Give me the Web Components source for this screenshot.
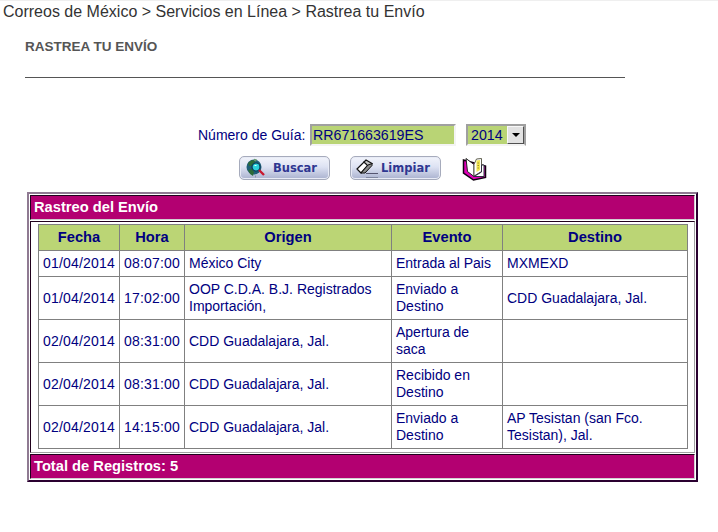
<!DOCTYPE html>
<html lang="es">
<head>
<meta charset="utf-8">
<title>Rastrea tu Envío</title>
<style>
    html,body{
        margin:0;
        background:#fff;
    }
    body{
        width:718px;
        height:532px;
        overflow:hidden;
        font-family:"Liberation Sans",Arial,sans-serif;
    }
</style>
</head>
<body>
<rastreo-page>
    <bread-crumb slot="crumb">Correos de México &gt; Servicios en Línea &gt; Rastrea tu Envío</bread-crumb>
    <page-title slot="title">RASTREA TU ENVÍO</page-title>
    <guia-form slot="form"></guia-form>
    <rastreo-panel slot="panel"></rastreo-panel>
</rastreo-page>

<script>
class RastreoPage extends HTMLElement{
    constructor(){
        super();
        this.attachShadow({mode:'open'}).innerHTML = `
        <style>
            :host{
                display:flex;
                flex-direction:column;
                border-top:1px solid #efefef;
            }
        </style>
        <slot name="crumb"></slot>
        <slot name="title"></slot>
        <slot name="form"></slot>
        <slot name="panel"></slot>`;
    }
}

class BreadCrumb extends HTMLElement{
    constructor(){
        super();
        this.attachShadow({mode:'open'}).innerHTML = `
        <style>
            :host{
                display:block;
                padding:2px 0 0 3px;
                font-size:16px;
                line-height:18px;
                color:#333;
            }
        </style>
        <slot></slot>`;
    }
}

class PageTitle extends HTMLElement{
    constructor(){
        super();
        this.attachShadow({mode:'open'}).innerHTML = `
        <style>
            :host{
                display:block;
                width:600px;
                margin:19px 0 0 25px;
                height:37px;
                border-bottom:1px solid #555;
                font-size:13.5px;
                font-weight:bold;
                line-height:14px;
                color:#555;
            }
        </style>
        <slot></slot>`;
    }
}

class GuiaForm extends HTMLElement{
    constructor(){
        super();
        this.attachShadow({mode:'open'}).innerHTML = `
        <style>
            :host{
                display:flex;
                flex-direction:column;
                margin-top:46px;
                width:718px;
                color:#000080;
                font-size:14.2px;
            }
            .fila{
                display:flex;
                align-items:center;
                height:22px;
                padding-left:198px;
            }
            label{
                width:112px;
                font-size:14px;
            }
            .campo,.anio{
                box-sizing:border-box;
                height:22px;
                background:#b9d475;
                border:2px solid;
                border-color:#a0a0a0 #f4f4f4 #f4f4f4 #a0a0a0;
                line-height:18px;
                color:#000080;
            }
            .campo{
                width:146px;
                padding-left:1px;
            }
            .anio{
                display:flex;
                justify-content:space-between;
                width:60px;
                margin-left:10px;
                padding-left:3px;
                border-right-color:#a0a0a0;
            }
            .flecha{
                box-sizing:border-box;
                width:17px;
                height:18px;
                background:#e2e2e2;
                border:1px solid;
                border-color:#f8f8f8 #505050 #505050 #f8f8f8;
                display:flex;
                align-items:center;
                justify-content:center;
            }
            .flecha::after{
                content:'';
                border:4px solid transparent;
                border-top:4px solid #000;
                border-bottom:0;
            }
            .botones{
                display:flex;
                align-items:flex-start;
                margin-top:10px;
                padding-left:239px;
            }
            .libro{
                margin-left:21px;
                margin-top:1px;
            }
            boton-icono + boton-icono{
                margin-left:20px;
            }
            .buscar{
                margin-right:8px;
                margin-left:6px;
            }
            .limpiar{
                margin-right:3px;
                margin-left:5px;
            }
        </style>
        <div class="fila">
            <label>Número de Guía:</label>
            <div class="campo">RR671663619ES</div>
            <div class="anio">2014<span class="flecha"></span></div>
        </div>
        <div class="botones">
            <boton-icono>
                <svg class="buscar" slot="icono" width="19" height="20" viewBox="0 0 19 20">
                    <circle cx="8" cy="9" r="7.5" fill="#1f5f78"/>
                    <path d="M2 5l4-3 3 1-1 3-3 2-2 0zM2 12l4-1 2 3-1 4-3-2z" fill="#2c6a38"/>
                    <path d="M8 .8l3 .6-1 2-2-.6z" fill="#6a9a70"/>
                    <circle cx="10" cy="9" r="4" fill="#2cd0dc" stroke="#0a3858" stroke-width="1.2"/>
                    <path d="M8.500 7.500l2 0" stroke="#d8ffff"/>
                    <path d="M13 12l5 5" stroke="#c81830" stroke-width="2.400"/>
                    <path d="M9.500 17.500v2" stroke="#9098a8"/>
                </svg>
                <span slot="icono">Buscar</span>
            </boton-icono>
            <boton-icono>
                <svg class="limpiar" slot="icono" width="22" height="21" viewBox="0 0 22 21">
                    <path d="M1 11l7-7 4 3-7 8z" fill="#fff" stroke="#111" stroke-width="1.200"/>
                    <path d="M8 4l2-2 6 3.500-4 2.500z" fill="#c4c4c4" stroke="#111" stroke-width="1.200"/>
                    <path d="M12 7l4-1.500 0 2-7 7.500-4 0z" fill="#8a8a8a" stroke="#111"/>
                    <path d="M10 15.500h12" stroke="#555570"/>
                    <path d="M10 19.500h12" stroke="#8088a0"/>
                </svg>
                <span slot="icono">Limpiar</span>
            </boton-icono>
            <svg class="libro" width="26" height="26" viewBox="0 0 26 26">
                <path d="M1.500 3v13l10 7 12-2.500V9z" fill="#e000b8" stroke="#100010" stroke-width="1.500"/>
                <path d="M4 1.500l1.500 13 6.500 5V7.500z" fill="#fff" stroke="#202020"/>
                <path d="M12 7.500l2.500-5.500 5-.5v13l-7.500 4.500z" fill="#fff" stroke="#606050"/>
                <path d="M14.500 3.500l3.500-.5v10l-3.500 2z" fill="#f4e850"/>
                <path d="M15.500 6h1.500M15.500 8.500h1.500M15.500 11h1.500" stroke="#a09030"/>
                <path d="M12 19.500l7.500-4.500V8h2.500v11.500z" fill="#fff" stroke="#303040"/>
            </svg>
        </div>`;
    }
}

class BotonIcono extends HTMLElement{
    constructor(){
        super();
        this.attachShadow({mode:'open'}).innerHTML = `
        <style>
            :host{
                display:flex;
                align-items:center;
                box-sizing:border-box;
                width:91px;
                height:24px;
                border:1px solid #a6abbc;
                border-radius:5px;
                background:linear-gradient(#f2f4fb,#dde2f3 45%,#aab2cf);
                box-shadow:inset 0 0 0 1px #e8ebf6;
                color:#2e3691;
                font-family:"DejaVu Sans",Verdana,sans-serif;
                font-size:11.5px;
                font-weight:bold;
            }
        </style>
        <slot name="icono"></slot>`;
    }
}

const registros = [
    ['01/04/2014','08:07:00','México City','Entrada al Pais','MXMEXD'],
    ['01/04/2014','17:02:00','OOP C.D.A. B.J. Registrados Importación,','Enviado a Destino','CDD Guadalajara, Jal.'],
    ['02/04/2014','08:31:00','CDD Guadalajara, Jal.','Apertura de saca',''],
    ['02/04/2014','08:31:00','CDD Guadalajara, Jal.','Recibido en Destino',''],
    ['02/04/2014','14:15:00','CDD Guadalajara, Jal.','Enviado a Destino','AP Tesistan (san Fco. Tesistan), Jal.']
];

class RastreoPanel extends HTMLElement{
    constructor(){
        super();
        const filas = registros.map((r, i) =>
            `<tr class="${i == 0 ? 'corta' : ''}">` +
            r.map((c, j) => `<td class="${j < 2 ? 'num' : ''}">${c}</td>`).join('') + '</tr>'
        ).join('');
        this.attachShadow({mode:'open'}).innerHTML = `
        <style>
            :host{
                display:block;
                box-sizing:border-box;
                width:671px;
                margin:9px 0 0 27px;
                padding:1px;
                border:2px solid;
                border-color:#8f7a92 #2a0030 #2a0030 #8f7a92;
                color:#000080;
                font-size:14px;
            }
            .barra{
                box-sizing:border-box;
                height:25px;
                padding-left:3px;
                background:#b30071;
                border:1px solid;
                border-color:#20001c #d0d0d0 #d0d0d0 #20001c;
                color:#fff;
                font-size:14.7px;
                font-weight:bold;
                line-height:22px;
            }
            .cuerpo{
                margin:1px 0;
                padding:2px 7px 3px;
                border:1px solid;
                border-color:#20001c #a0a0a0 #a0a0a0 #20001c;
            }
            table{
                border-collapse:collapse;
                table-layout:fixed;
                width:649px;
            }
            th,td{
                border:1px solid #808080;
                padding:0 4px;
                line-height:17px;
                font-weight:normal;
                text-align:left;
            }
            td.num{
                letter-spacing:.2px;
            }
            th{
                height:25px;
                background:#bbd575;
                font-size:14.7px;
                font-weight:bold;
                text-align:center;
            }
            tr{
                height:43px;
            }
            tr.corta{
                height:26px;
            }
        </style>
        <div class="barra">Rastreo del Envío</div>
        <div class="cuerpo">
            <table>
                <colgroup>
                    <col style="width:81px"><col style="width:65px"><col style="width:207px"><col style="width:111px"><col style="width:185px">
                </colgroup>
                <thead>
                    <tr class="corta"><th>Fecha</th><th>Hora</th><th>Origen</th><th>Evento</th><th>Destino</th></tr>
                </thead>
                <tbody>${filas}</tbody>
            </table>
        </div>
        <div class="barra">Total de Registros: 5</div>`;
    }
}

window.customElements.define('boton-icono', BotonIcono);
window.customElements.define('rastreo-page', RastreoPage);
window.customElements.define('bread-crumb', BreadCrumb);
window.customElements.define('page-title', PageTitle);
window.customElements.define('guia-form', GuiaForm);
window.customElements.define('rastreo-panel', RastreoPanel);
</script>
</body>
</html>
